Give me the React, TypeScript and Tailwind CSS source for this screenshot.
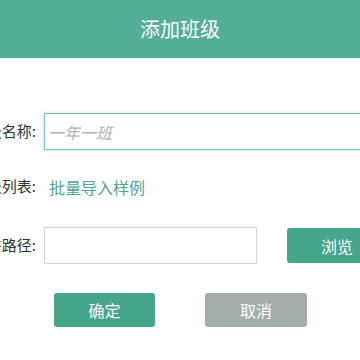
export default function App() {
    return (
        <div className="w-[360px] h-[360px] overflow-hidden bg-white" style={{ fontFamily: '"Noto Sans CJK SC", sans-serif' }}>
            <div className="h-[58px] bg-[#53ae96] flex items-center justify-center text-white text-[20px]">
                添加班级
            </div>

            <div className="ml-[-44px] w-[440px]">
                <div className="mt-[55px] flex items-center h-[37px]">
                    <label className="w-[80px] text-right text-[15px] text-[#333]">班级名称:</label>
                    <input
                        type="text"
                        placeholder="一年一班"
                        className="ml-[8px] w-[340px] h-[37px] px-[3px] border border-[#7fc4bf] outline-none text-[16px] placeholder:italic placeholder:text-[#b3b3b3] shadow-[0_0_3px_rgba(127,196,191,0.6)]"
                    />
                </div>

                <div className="mt-[18px] flex items-center h-[37px]">
                    <label className="w-[80px] text-right text-[15px] text-[#333]">班级列表:</label>
                    <a className="ml-[13px] text-[16px] text-[#4fa792] cursor-pointer">批量导入样例</a>
                </div>

                <div className="mt-[22px] flex items-center h-[37px]">
                    <label className="w-[80px] text-right text-[15px] text-[#333]">文件路径:</label>
                    <input
                        type="text"
                        className="ml-[8px] w-[213px] h-[37px] border border-[#d5d5d5] outline-none"
                    />
                    <button className="ml-[30px] w-[100px] h-[35px] rounded-[3px] bg-[#45a68b] text-white text-[16px]">
                        浏览
                    </button>
                </div>
            </div>

            <div className="mt-[29px] flex pl-[54px] gap-[50px]">
                <button className="w-[101px] h-[34px] rounded-[3px] bg-[#45a68b] text-white text-[16px]">确定</button>
                <button className="w-[102px] h-[34px] rounded-[3px] bg-[#a3adaa] text-white text-[16px]">取消</button>
            </div>
        </div>
    )
}
